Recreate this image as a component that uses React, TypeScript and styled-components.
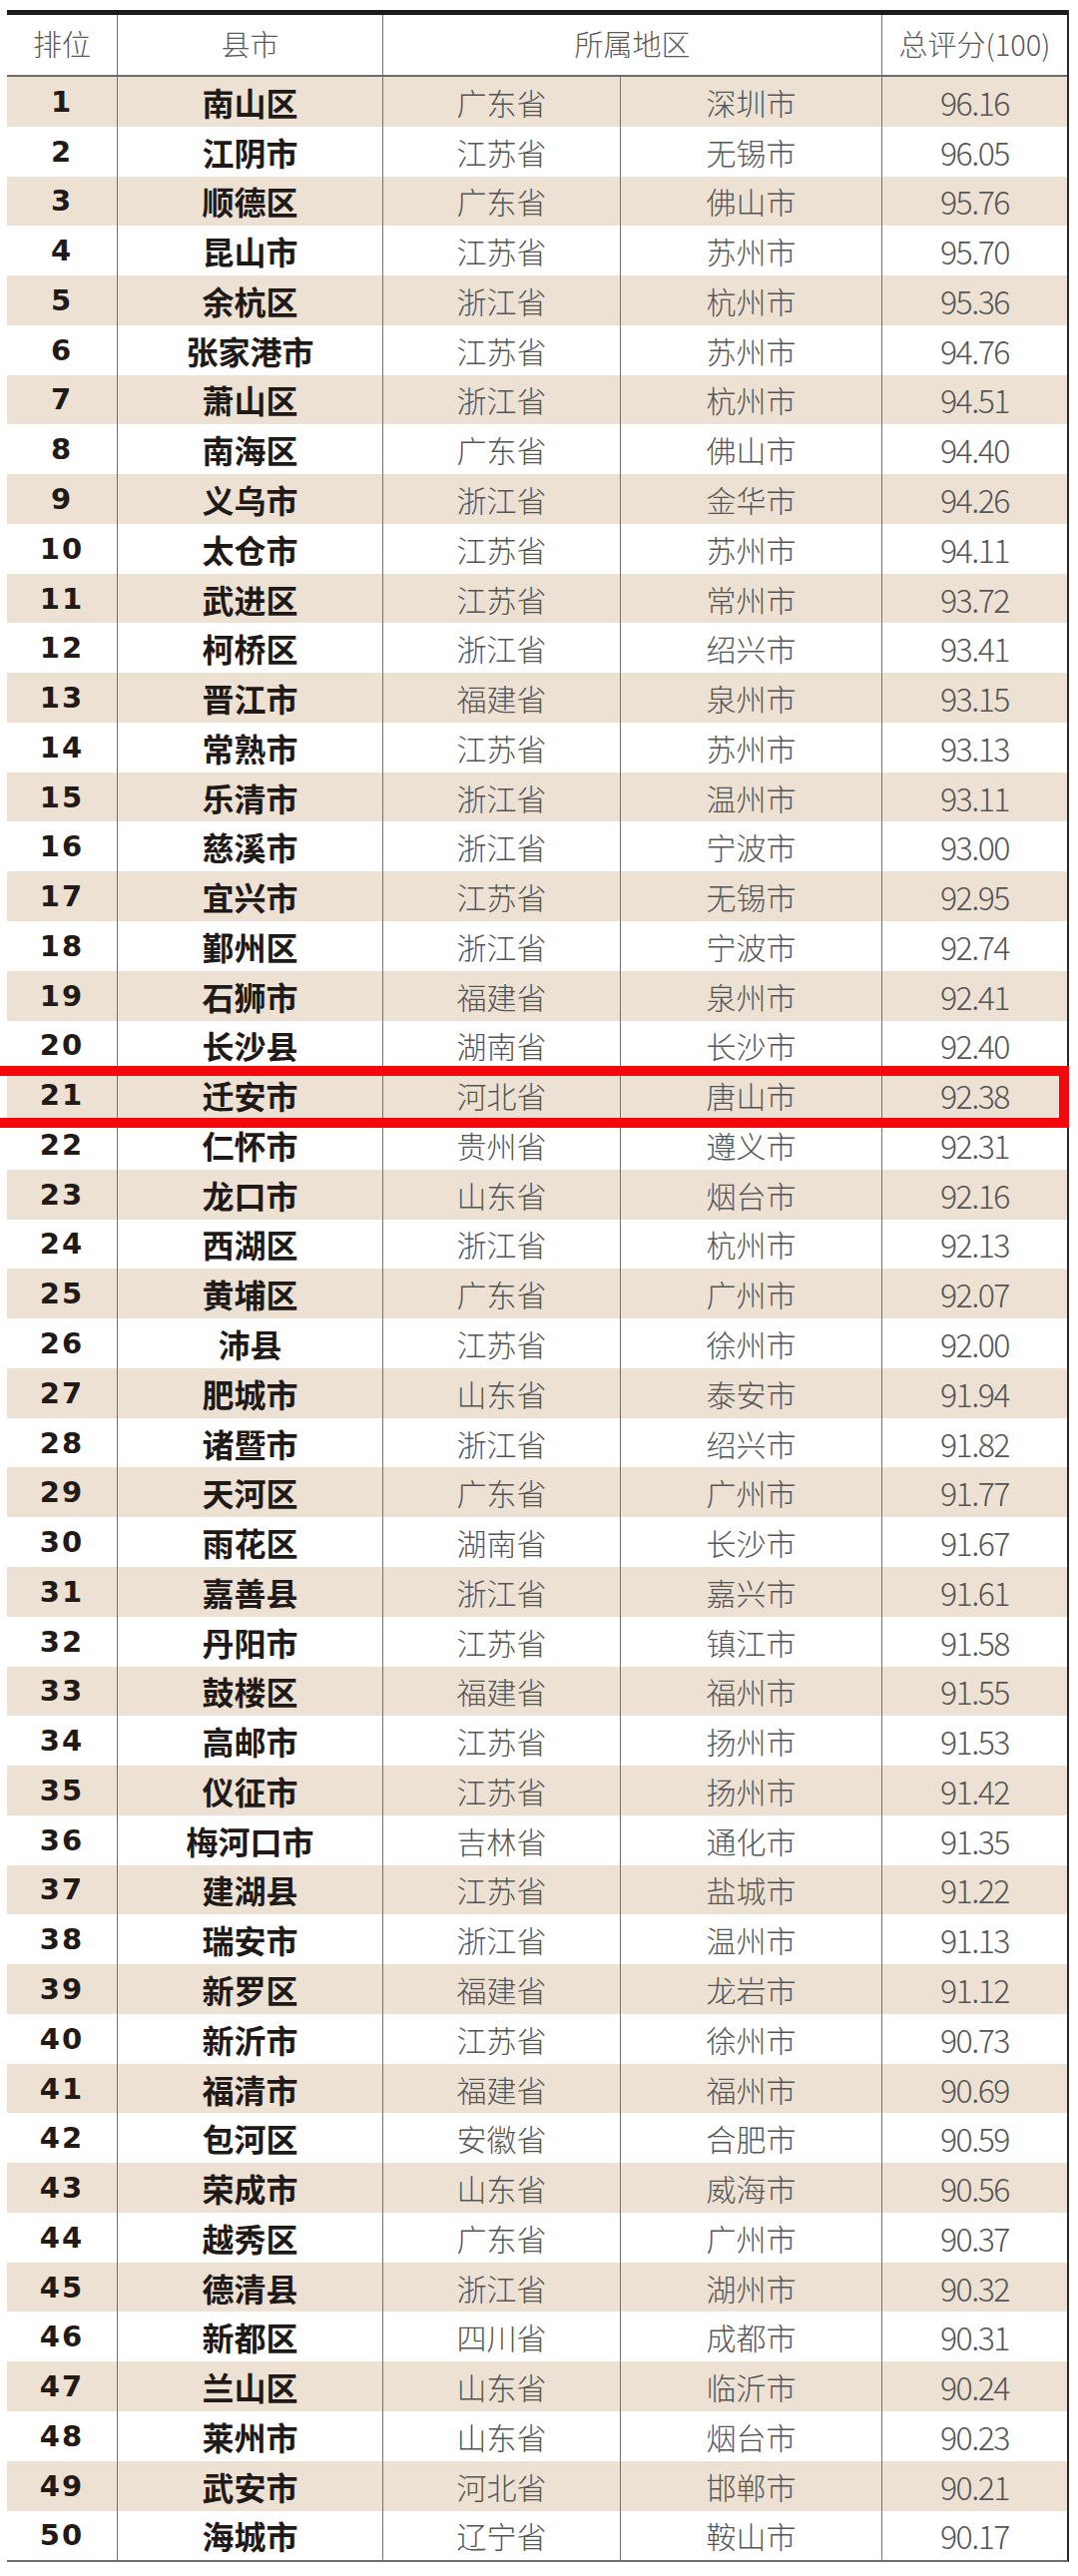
import styled, { createGlobalStyle } from "styled-components";

const rows: [string, string, string, string][] = [
  ["南山区", "广东省", "深圳市", "96.16"],
  ["江阴市", "江苏省", "无锡市", "96.05"],
  ["顺德区", "广东省", "佛山市", "95.76"],
  ["昆山市", "江苏省", "苏州市", "95.70"],
  ["余杭区", "浙江省", "杭州市", "95.36"],
  ["张家港市", "江苏省", "苏州市", "94.76"],
  ["萧山区", "浙江省", "杭州市", "94.51"],
  ["南海区", "广东省", "佛山市", "94.40"],
  ["义乌市", "浙江省", "金华市", "94.26"],
  ["太仓市", "江苏省", "苏州市", "94.11"],
  ["武进区", "江苏省", "常州市", "93.72"],
  ["柯桥区", "浙江省", "绍兴市", "93.41"],
  ["晋江市", "福建省", "泉州市", "93.15"],
  ["常熟市", "江苏省", "苏州市", "93.13"],
  ["乐清市", "浙江省", "温州市", "93.11"],
  ["慈溪市", "浙江省", "宁波市", "93.00"],
  ["宜兴市", "江苏省", "无锡市", "92.95"],
  ["鄞州区", "浙江省", "宁波市", "92.74"],
  ["石狮市", "福建省", "泉州市", "92.41"],
  ["长沙县", "湖南省", "长沙市", "92.40"],
  ["迁安市", "河北省", "唐山市", "92.38"],
  ["仁怀市", "贵州省", "遵义市", "92.31"],
  ["龙口市", "山东省", "烟台市", "92.16"],
  ["西湖区", "浙江省", "杭州市", "92.13"],
  ["黄埔区", "广东省", "广州市", "92.07"],
  ["沛县", "江苏省", "徐州市", "92.00"],
  ["肥城市", "山东省", "泰安市", "91.94"],
  ["诸暨市", "浙江省", "绍兴市", "91.82"],
  ["天河区", "广东省", "广州市", "91.77"],
  ["雨花区", "湖南省", "长沙市", "91.67"],
  ["嘉善县", "浙江省", "嘉兴市", "91.61"],
  ["丹阳市", "江苏省", "镇江市", "91.58"],
  ["鼓楼区", "福建省", "福州市", "91.55"],
  ["高邮市", "江苏省", "扬州市", "91.53"],
  ["仪征市", "江苏省", "扬州市", "91.42"],
  ["梅河口市", "吉林省", "通化市", "91.35"],
  ["建湖县", "江苏省", "盐城市", "91.22"],
  ["瑞安市", "浙江省", "温州市", "91.13"],
  ["新罗区", "福建省", "龙岩市", "91.12"],
  ["新沂市", "江苏省", "徐州市", "90.73"],
  ["福清市", "福建省", "福州市", "90.69"],
  ["包河区", "安徽省", "合肥市", "90.59"],
  ["荣成市", "山东省", "威海市", "90.56"],
  ["越秀区", "广东省", "广州市", "90.37"],
  ["德清县", "浙江省", "湖州市", "90.32"],
  ["新都区", "四川省", "成都市", "90.31"],
  ["兰山区", "山东省", "临沂市", "90.24"],
  ["莱州市", "山东省", "烟台市", "90.23"],
  ["武安市", "河北省", "邯郸市", "90.21"],
  ["海城市", "辽宁省", "鞍山市", "90.17"],
];

// the row that carries the red frame in the source image
const HIGHLIGHT = 21;

const App = () => {
  return (
    <>
      <GlobalStyle />
      <Table>
        <HeaderRow>
          <HeadCell>排位</HeadCell>
          <HeadCell>县市</HeadCell>
          <HeadCell>所属地区</HeadCell>
          <HeadCell $last>总评分(100)</HeadCell>
        </HeaderRow>
        {rows.map(([county, province, city, score], i) => (
          <Row key={county} $shaded={i % 2 === 0}>
            <RankCell>{i + 1}</RankCell>
            <NameCell>{county}</NameCell>
            <Cell>{province}</Cell>
            <Cell>{city}</Cell>
            <ScoreCell>{score}</ScoreCell>
            {i + 1 === HIGHLIGHT && <Frame />}
          </Row>
        ))}
      </Table>
    </>
  );
};

export default App;

const GlobalStyle = createGlobalStyle`
  body {
    margin: 0;
    background: #ffffff;
    font-family: "Noto Sans CJK SC", "Noto Sans", sans-serif;
    overflow-x: hidden;
  }
`;

const Table = styled.div`
  width: 1064px;
  margin: 10px 0 0 7px;
  border-right: 2px solid #2a2a2a;
  border-bottom: 2px solid #6e6e6e;
  box-sizing: border-box;
`;

const HeaderRow = styled.div`
  display: grid;
  grid-template-columns: 111px 266px 500px 1fr;
  height: 67px;
  border-top: 5px solid #1c1c1c;
  border-bottom: 2px solid #6a6a6a;
  box-sizing: border-box;
  background: #ffffff;
`;

const HeadCell = styled.div<{ $last?: boolean }>`
  display: flex;
  align-items: center;
  justify-content: center;
  border-right: ${({ $last }) => ($last ? "none" : "1.5px solid #6f6f6f")};
  font-size: 29px;
  font-weight: 300;
  color: #5a5a5a;
  padding-bottom: 4px;
`;

const Row = styled.div<{ $shaded: boolean }>`
  position: relative;
  display: grid;
  grid-template-columns: 111px 266px 238px 262px 1fr;
  height: 49.78px;
  background: ${({ $shaded }) => ($shaded ? "#ede1d3" : "#ffffff")};
`;

const Frame = styled.span`
  position: absolute;
  left: -17px;
  right: -2px;
  top: -4px;
  bottom: -8px;
  border: 10px solid #f5080c;
  box-sizing: border-box;
  pointer-events: none;
  z-index: 2;
`;

const Cell = styled.div`
  display: flex;
  align-items: center;
  justify-content: center;
  border-right: 1.5px solid #707070;
  font-size: 30px;
  font-weight: 300;
  color: #555555;
  white-space: nowrap;
`;

const RankCell = styled(Cell)`
  font-family: "DejaVu Sans", "Noto Sans", sans-serif;
  font-size: 29px;
  font-weight: 700;
  color: #211a16;
  letter-spacing: 2px;
`;

const NameCell = styled(Cell)`
  font-size: 32px;
  font-weight: 700;
  color: #1f1a17;
`;

const ScoreCell = styled(Cell)`
  border-right: none;
  font-size: 32px;
  letter-spacing: -1.5px;
`;
